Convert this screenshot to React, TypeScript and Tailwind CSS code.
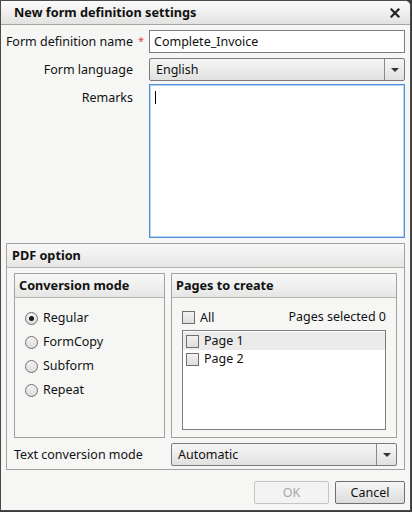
import React from "react";

const font = { fontFamily: '"Noto Sans", "Open Sans", Arial, sans-serif' };

function Radio({ checked, label }: { checked?: boolean; label: string }) {
  return (
    <div className="flex items-center h-[24px]">
      <span className="w-[13px] h-[13px] rounded-full border border-[#6f6f6f] bg-gradient-to-b from-[#f4f4f4] to-[#dcdcdc] flex items-center justify-center">
        {checked && <span className="w-[5px] h-[5px] rounded-full bg-[#1a1a1a]" />}
      </span>
      <span className="ml-[5px] text-[12.5px] text-[#111] pt-[1px]">{label}</span>
    </div>
  );
}

function Check() {
  return (
    <span className="w-[13px] h-[13px] border border-[#707070] bg-gradient-to-b from-[#f2f2f2] to-[#dedede] inline-block shrink-0" />
  );
}

function Arrow() {
  return (
    <div className="w-[20px] h-full border-l border-[#8a8a8a] flex items-center justify-center">
      <svg width="8" height="4" viewBox="0 0 8 4">
        <path d="M0 0 H8 L4 4 Z" fill="#333" />
      </svg>
    </div>
  );
}

export default function App() {
  return (
    <div className="w-[412px] h-[512px] bg-[#3b3b3b]" style={font}>
      <div className="w-[411px] h-[511px] border border-[#4a4a4a] rounded-tr-[6px] bg-[#f6f7f5] flex flex-col overflow-hidden">
        {/* Title bar */}
        <div className="h-[24px] shrink-0 bg-gradient-to-b from-[#fbfbfb] to-[#e2e3e1] border-b border-[#a4a4a4] flex items-center pl-[13px] pr-[10px]">
          <span className="text-[12.7px] font-bold text-[#111] flex-1 whitespace-nowrap pt-[1px]">New form definition settings</span>
          <svg width="10" height="10" viewBox="0 0 10 10">
            <path d="M1.5 1.5 L8.5 8.5 M8.5 1.5 L1.5 8.5" stroke="#222" strokeWidth="2.2" strokeLinecap="square" />
          </svg>
        </div>

        {/* Row 1 */}
        <div className="flex items-center mt-[5px] h-[23px]">
          <div className="w-[132px] text-right text-[12.5px] text-[#111] shrink-0 whitespace-nowrap pt-[1px]">Form definition name</div>
          <div className="w-[16px] text-center text-[11px] text-[#e04848] shrink-0">*</div>
          <div className="flex-1 mr-[5px] h-[23px] border border-[#7d7d7d] bg-white flex items-center pl-[4px] pt-[1px] text-[12.5px] text-[#111]">
            Complete_Invoice
          </div>
        </div>

        {/* Row 2 */}
        <div className="flex items-center mt-[5px] h-[23px]">
          <div className="w-[132px] text-right text-[12.5px] text-[#111] shrink-0 whitespace-nowrap pt-[1px]">Form language</div>
          <div className="w-[16px] shrink-0" />
          <div className="flex-1 mr-[5px] h-[23px] border border-[#7a7a7a] rounded-[2px] bg-gradient-to-b from-[#f6f6f6] to-[#e1e1e1] flex items-center">
            <span className="flex-1 pl-[6px] pt-[1px] text-[12.5px] text-[#111]">English</span>
            <Arrow />
          </div>
        </div>

        {/* Remarks */}
        <div className="flex mt-[3px]">
          <div className="w-[132px] text-right text-[12.5px] text-[#111] shrink-0 pt-[5px] whitespace-nowrap">Remarks</div>
          <div className="w-[16px] shrink-0" />
          <div className="flex-1 mr-[5px] h-[154px] border border-[#4d90d8] shadow-[inset_0_0_0_1px_#b5d5f3] bg-white pl-[5px] pt-[6px]">
            <div className="w-[1px] h-[13px] bg-black" />
          </div>
        </div>

        {/* PDF option */}
        <div className="mx-[5px] mt-[5px] border border-[#a3a3a3] flex flex-col">
          <div className="h-[24px] bg-gradient-to-b from-[#f8f8f8] to-[#e6e7e5] border-b border-[#b5b5b5] flex items-center pl-[5px] pt-[1px] text-[12.7px] font-bold text-[#111]">
            PDF option
          </div>
          <div className="flex px-[7px] pt-[5px] gap-[6px]">
            {/* Conversion mode */}
            <div className="w-[151px] h-[165px] border border-[#a3a3a3] flex flex-col">
              <div className="h-[24px] bg-gradient-to-b from-[#f8f8f8] to-[#e6e7e5] border-b border-[#b5b5b5] flex items-center pl-[4px] pt-[1px] text-[12.7px] font-bold text-[#111]">
                Conversion mode
              </div>
              <div className="pl-[10px] pt-[8px] flex flex-col">
                <Radio checked label="Regular" />
                <Radio label="FormCopy" />
                <Radio label="Subform" />
                <Radio label="Repeat" />
              </div>
            </div>
            {/* Pages to create */}
            <div className="flex-1 h-[165px] border border-[#a3a3a3] flex flex-col">
              <div className="h-[24px] bg-gradient-to-b from-[#f8f8f8] to-[#e6e7e5] border-b border-[#b5b5b5] flex items-center pl-[4px] pt-[1px] text-[12.7px] font-bold text-[#111]">
                Pages to create
              </div>
              <div className="px-[10px] flex flex-col">
                <div className="flex items-center h-[20px] mt-[9px]">
                  <Check />
                  <span className="ml-[5px] text-[12.5px] text-[#111] flex-1 mt-[3px]">All</span>
                  <span className="text-[12.5px] text-[#111]">Pages selected 0</span>
                </div>
                <div className="mt-[3px] h-[100px] border border-[#7d7d7d] bg-white flex flex-col pt-[1px]">
                  <div className="h-[18px] bg-[#ebebeb] flex items-center pl-[3px]">
                    <Check />
                    <span className="ml-[5px] pt-[1px] text-[12.5px] text-[#111]">Page 1</span>
                  </div>
                  <div className="h-[18px] flex items-center pl-[3px]">
                    <Check />
                    <span className="ml-[5px] pt-[1px] text-[12.5px] text-[#111]">Page 2</span>
                  </div>
                </div>
              </div>
            </div>
          </div>
          {/* Text conversion mode */}
          <div className="flex items-center px-[7px] mt-[5px] mb-[3px] gap-[6px]">
            <div className="w-[151px] pt-[1px] text-[12.5px] text-[#111] whitespace-nowrap">Text conversion mode</div>
            <div className="flex-1 h-[23px] border border-[#7a7a7a] rounded-[2px] bg-gradient-to-b from-[#f6f6f6] to-[#e1e1e1] flex items-center">
              <span className="flex-1 pl-[6px] pt-[1px] text-[12.5px] text-[#111]">Automatic</span>
              <Arrow />
            </div>
          </div>
        </div>

        {/* Footer */}
        <div className="flex justify-end gap-[6px] mr-[5px] mt-[11px]">
          <div className="w-[75px] h-[23px] border border-[#c4c4c4] rounded-[2px] bg-[#f3f3f3] flex items-center justify-center pt-[1px] text-[12.5px] text-[#a6a6a6]">
            OK
          </div>
          <div className="w-[70px] h-[23px] border border-[#707070] rounded-[2px] bg-gradient-to-b from-[#f6f6f6] to-[#dcdcdc] flex items-center justify-center pt-[1px] text-[12.5px] text-[#111]">
            Cancel
          </div>
        </div>
      </div>
    </div>
  );
}
